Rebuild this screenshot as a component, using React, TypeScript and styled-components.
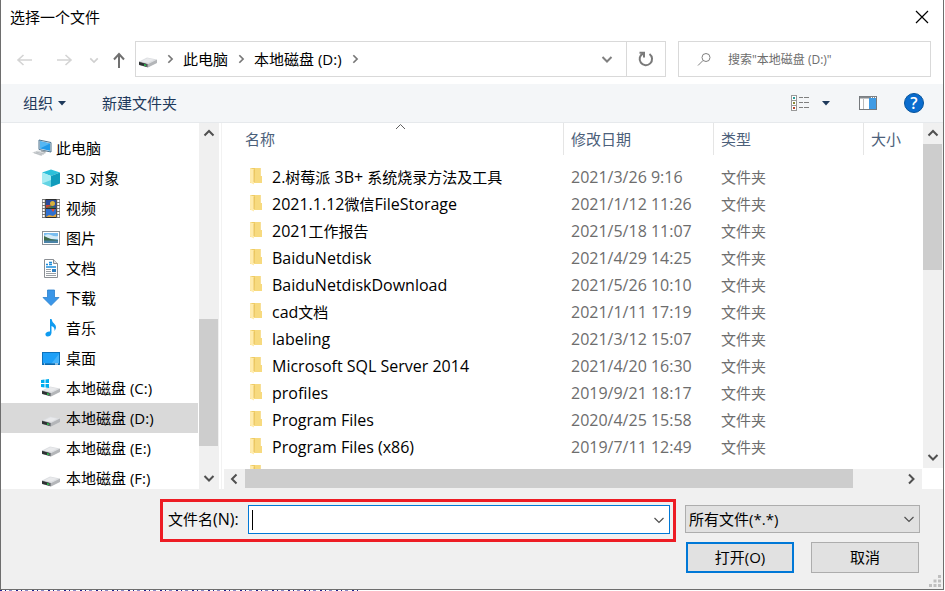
import React from 'react';
import styled, { createGlobalStyle } from 'styled-components';

const uiFont = '"Open Sans", "Noto Sans CJK SC", sans-serif';

const GlobalStyle = createGlobalStyle`
  *, *::before, *::after { box-sizing: border-box; }
  html, body { margin: 0; height: 100%; overflow: hidden; }
  body { background: #fff; font-family: ${uiFont}; font-size: 15px; line-height: 24px; color: #000; }
  button, input, select { font: inherit; color: inherit; }
  button { background: none; border: 0; padding: 0; cursor: default; }
  svg { display: block; flex: none; }
`;

const Desktop = styled.div`
  height: 100vh;
  display: flex;
  flex-direction: column;
  padding-right: 1px;
`;

const Dialog = styled.div`
  flex: 1;
  min-height: 0;
  display: flex;
  flex-direction: column;
  border: solid #6e6e6e;
  border-width: 0 1px 1px 1px;
  background: #fff;
`;

const Backdrop = styled.div`
  height: 1px;
  width: 38%;
  background: repeating-linear-gradient(90deg, #22228c 0 2px, #fff 2px 5px, #22228c 5px 6px, #fff 6px 9px, #8a8ac8 9px 12px, #fff 12px 16px);
`;

const TitleBar = styled.header`
  height: 41px;
  flex: none;
  display: flex;
  justify-content: space-between;
  padding: 0 14px 0 9px;
`;

const Title = styled.h1`
  margin: 0;
  font-size: 15px;
  font-weight: 400;
  line-height: 35px;
`;

const CloseButton = styled.button`
  height: 34px;
`;

const NavBar = styled.nav`
  flex: none;
  display: flex;
  align-items: center;
  padding: 0 12px 7px 14px;
`;

const NavButtons = styled.div`
  width: 120px;
  flex: none;
  display: grid;
  grid-template-columns: 41px 33px 21px 25px;
  align-items: center;
  padding-top: 2px;
`;

const Field = styled.div`
  height: 36px;
  display: flex;
  align-items: center;
  border: 1px solid #d9d9d9;
  min-width: 0;
`;

const AddressField = styled(Field)`
  flex: 529 1 0;
`;

const SearchField = styled(Field)`
  flex: 233 1 0;
  margin-left: 12px;
  padding-left: 18px;
  gap: 16px;
`;

const SearchInput = styled.input`
  flex: 1;
  min-width: 0;
  height: 32px;
  border: 0;
  padding: 0;
  outline: 0;
  font-size: 12px;
  &::placeholder { color: #6d6d6d; opacity: 1; }
`;

const Crumbs = styled.div`
  flex: 1;
  min-width: 0;
  display: flex;
  align-items: center;
  padding-left: 2px;
  gap: 8px;
  white-space: nowrap;
`;

const AddressButton = styled.button<{ $divided?: boolean }>`
  width: 39px;
  height: 34px;
  display: grid;
  place-items: center;
  border-left: ${p => (p.$divided ? '1px solid #d9d9d9' : '0')};
`;

const Toolbar = styled.div`
  flex: none;
  height: 39px;
  display: flex;
  align-items: center;
  padding: 0 19px 0 22px;
  background: #f4f6f8;
  border-bottom: 1px solid #e6e9ec;
  color: #1e395b;
`;

const ToolButton = styled.button`
  display: flex;
  align-items: center;
  gap: 5px;
  margin-right: 36px;
`;

const ToolIcons = styled.div`
  margin-left: auto;
  display: flex;
  align-items: center;
`;

const IconButton = styled.button<{ $gap: number }>`
  margin-left: ${p => p.$gap}px;
`;

const Body = styled.div`
  flex: 1;
  min-height: 0;
  display: flex;
`;

const Sidebar = styled.aside`
  flex: none;
  width: 221px;
  display: flex;
  border-right: 1px solid #f2f2f2;
`;

const Tree = styled.ul`
  flex: 1;
  margin: 0;
  padding: 10px 0 0;
  list-style: none;
  overflow: hidden;
`;

const TreeItem = styled.li<{ $root?: boolean; $selected?: boolean }>`
  height: 30px;
  display: flex;
  align-items: center;
  gap: ${p => (p.$root ? 4 : 6)}px;
  margin-right: 1px;
  padding-left: ${p => (p.$root ? 31 : 40)}px;
  background: ${p => (p.$selected ? '#d9d9d9' : 'transparent')};
  white-space: nowrap;
`;

const VScroll = styled.div<{ $inset?: number }>`
  flex: none;
  width: 20px;
  margin-right: ${p => p.$inset ?? 0}px;
  display: flex;
  flex-direction: column;
  align-items: stretch;
  background: #f0f0f0;
`;

const HScroll = styled.div`
  flex: none;
  height: 20px;
  margin-left: 2px;
  display: flex;
  background: #f0f0f0;
`;

const ScrollButton = styled.button`
  flex: none;
  width: 20px;
  height: 21px;
  display: grid;
  place-items: center;
  padding: 0 1px 1px 0;
`;

const WideScrollButton = styled(ScrollButton)`
  width: 21px;
`;

const Track = styled.div<{ $horizontal?: boolean }>`
  flex: 1;
  display: flex;
  flex-direction: ${p => (p.$horizontal ? 'row' : 'column')};
`;

const Space = styled.div<{ $grow: number }>`
  flex: ${p => p.$grow} 1 0;
`;

const Thumb = styled(Space)`
  background: #cdcdcd;
  margin: 0 1px 0 0;
`;

const HThumb = styled(Space)`
  background: #cdcdcd;
  height: 19px;
`;

const Main = styled.main`
  flex: 1;
  min-width: 0;
  display: flex;
`;

const ListColumn = styled.div`
  flex: 1;
  min-width: 0;
  display: flex;
  flex-direction: column;
`;

const ListViewport = styled.div`
  flex: 1;
  min-height: 0;
  overflow: hidden;
`;

const ScrollColumn = styled.div`
  flex: none;
  width: 21px;
  padding: 0 0 21px 1px;
  display: flex;
`;

const FileTable = styled.table`
  width: 100%;
  table-layout: fixed;
  border-collapse: separate;
  border-spacing: 0;
  white-space: nowrap;
  tbody::before { content: ''; display: block; height: 8px; }
`;

const Head = styled.th<{ $width?: number }>`
  width: ${p => (p.$width ? `${p.$width}px` : 'auto')};
  height: 32px;
  padding: 0 0 0 ${p => (p.$width ? 7 : 23)}px;
  border-left: ${p => (p.$width ? '1px solid #e5e5e5' : '0')};
  color: #4c607a;
  font-weight: 400;
  text-align: left;
`;

const HeadLabel = styled.div`
  position: relative;
  margin-right: 18px;
`;

const SortMark = styled.svg`
  position: absolute;
  left: 50%;
  top: -4px;
`;

const Cell = styled.td`
  height: 27px;
  padding: 0 0 0 8px;
  color: #6d6d6d;
`;

const NameCell = styled(Cell)`
  padding-left: 27px;
  color: #000;
`;

const FileName = styled.div`
  display: flex;
  align-items: center;
  gap: 10px;
`;

const Latin = styled.span`
  font-size: 16px;
  line-height: 20px;
`;

const Footer = styled.footer`
  flex: none;
  position: relative;
  height: 100px;
  display: grid;
  grid-template-columns: 1fr 235px;
  grid-template-rows: 43px 31px;
  column-gap: 9px;
  padding: 10px 23px 0 159px;
  background: #f0f0f0;
`;

const Highlight = styled.div`
  display: flex;
  align-items: center;
  justify-content: space-between;
  gap: 9px;
  border: 3px solid #ed1c24;
  padding: 0 3px 2px 5px;
  label { padding-bottom: 2px; }
`;

const Combo = styled.div`
  flex: 1;
  height: 29px;
  display: flex;
  align-items: center;
  padding: 0 4px 0 3px;
  border: 1px solid #0078d7;
  background: #fff;
`;

const Caret = styled.span`
  width: 1px;
  height: 20px;
  background: #000;
`;

const NameInput = styled.input`
  flex: 1;
  min-width: 0;
  border: 0;
  outline: 0;
  padding: 0 2px;
  height: 24px;
  background: transparent;
`;

const FilterBox = styled.div`
  display: grid;
  align-items: center;
  height: 28px;
  margin-top: 6px;
  border: 1px solid #adadad;
  background: #e1e1e1;
  & > * { grid-area: 1 / 1; }
  & > svg { justify-self: end; margin-right: 4px; pointer-events: none; }
`;

const FilterSelect = styled.select`
  appearance: none;
  width: 100%;
  height: 26px;
  border: 0;
  outline: 0;
  padding: 0 3px;
  background: transparent;
`;

const Actions = styled.div`
  grid-column: 2;
  display: grid;
  grid-template-columns: 1fr 1fr;
  gap: 17px;
  padding: 0 1px;
`;

const ActionButton = styled.button<{ $primary?: boolean }>`
  height: 31px;
  padding-bottom: 2px;
  background: #e1e1e1;
  border: ${p => (p.$primary ? '2px solid #0078d7' : '1px solid #adadad')};
`;

const Grip = styled.svg`
  position: absolute;
  right: 2px;
  bottom: 2px;
`;

type Dir = 'up' | 'down' | 'left' | 'right';
const chevrons: Record<Dir, string> = {
  up: 'M1.500 8.500 L6 4 L10.500 8.500',
  down: 'M1.500 4 L6 8.500 L10.500 4',
  left: 'M8.500 1.500 L4 6 L8.500 10.500',
  right: 'M4 1.500 L8.500 6 L4 10.500',
};

const Chevron = ({ dir, size = 12, color = '#505050', weight = 2 }: { dir: Dir; size?: number; color?: string; weight?: number }) => (
  <svg width={size} height={size} viewBox="0 0 12 12" fill="none" stroke={color} strokeWidth={weight}>
    <path d={chevrons[dir]} />
  </svg>
);

const Arrow = ({ dir, color }: { dir: 'left' | 'right' | 'up'; color: string }) => {
  const d = {
    left: 'M17 9 H3 M8.500 4 L3 9 L8.500 14',
    right: 'M1 9 H15 M9.500 4 L15 9 L9.500 14',
    up: 'M9 17 V3 M4 8.500 L9 3 L14 8.500',
  }[dir];
  return (
    <svg width="18" height="18" viewBox="0 0 18 18" fill="none" stroke={color} strokeWidth={dir === 'up' ? 2 : 1.6}>
      <path d={d} />
    </svg>
  );
};

const DriveIcon = ({ windows }: { windows?: boolean }) => (
  <svg width="19" height="18" viewBox="0 0 19 18">
    <path d="M1 11.500 L9 7.500 L19 9.500 L10 14Z" fill="#dcdee1" />
    <path d="M3 11.500 L9.500 8.300 L16 9.700 L10 12.500Z" fill="#e9eaec" />
    <path d="M10 14 L19 9.500 V13 L10 17.500Z" fill="#b4b6b9" />
    <path d="M1 11.500 L10 14 V17.500 L1 15Z" fill="#7e8286" />
    <path d="M1 12 L8.500 14 V16.800 L1 14.700Z" fill="#2e3133" />
    <path d="M6 14 L8 14.500 V16.300 L6 15.800Z" fill="#2fb84f" />
    {windows && <path d="M0 1 L3.500 .5V4H0Z M4.500 .5 L8 0V4H4.500Z M0 5H3.500V8.500L0 8Z M4.500 5H8V9L4.500 8.500Z" fill="#00adef" />}
  </svg>
);

const PcIcon = () => (
  <svg width="20" height="18" viewBox="0 0 20 18">
    <path d="M7 1 L19 3.500 V13 L7 10.500Z" fill="#dfe7ee" />
    <path d="M7 1 L19 3.500 V13 L7 10.500Z" fill="none" stroke="#4d7590" />
    <path d="M8 2.300 L18 4.500 V11.700 L8 9.500Z" fill="#2199e8" />
    <path d="M8 2.300 L18 4.500 L8 9.500Z" fill="#55b7f3" />
    <path d="M9 11 L14 12 L13 14.500 L9 13.500Z" fill="#9ca4aa" />
    <path d="M0 13.500 L6 11.500 L14 14 L9 17Z" fill="#d8dbdd" />
    <path d="M2 13.700 L10 16 M4 13 L12 15" stroke="#a9afb3" strokeWidth=".7" />
  </svg>
);

const CubeIcon = () => (
  <svg width="19" height="19" viewBox="0 0 19 19">
    <path d="M1 3.500 L10 .5 L19 3.500 L10 7Z" fill="#2cc0da" />
    <path d="M1 3.500 L10 7 V18 L1 14.500Z" fill="#a7ecf3" />
    <path d="M1 14.500 L10 11 V18Z" fill="#62d3e3" />
    <path d="M10 7 L19 3.500 V14.500 L10 18Z" fill="#109cbc" />
  </svg>
);

const VideoIcon = () => (
  <svg width="19" height="19" viewBox="0 0 19 19">
    <rect x="1" width="18" height="19" fill="#777" />
    <rect x="4.500" width="11" height="19" fill="#2b2b2b" />
    <path d="M2.700 1 V19 M17.300 1 V19" stroke="#fff" strokeWidth="2" strokeDasharray="2 1" />
    <rect x="5" y="1" width="10" height="8" fill="#2a4a9c" />
    <rect x="5" y="10" width="10" height="8" fill="#2f70d0" />
    <path d="M5 6 H10 V9 H5Z" fill="#c44536" />
    <circle cx="11.500" cy="4.500" r="2.500" fill="#d8b13c" />
    <path d="M5 8.500 L10 7 L15 9Z" fill="#447b36" />
    <path d="M10 10 H14 L12 13Z" fill="#e04a32" />
    <path d="M5 18 L8 16 L12 17 L15 15 V18Z" fill="#e3a53a" />
  </svg>
);

const PictureIcon = () => (
  <svg width="19" height="16" viewBox="0 0 19 16">
    <rect x="1.500" y="1.500" width="17" height="13" fill="#fff" stroke="#8d9399" />
    <rect x="3" y="3" width="14" height="10" fill="#79bdf0" />
    <path d="M3 6 Q6 3 10 5 T17 6 V9 H3Z" fill="#d5ebf8" />
    <path d="M3 6 Q7 8 10 9 L17 10 V11 H3Z" fill="#3f6b4c" />
    <path d="M3 10.500 H17 V13 H3Z" fill="#4b84a8" />
  </svg>
);

const DocumentIcon = () => (
  <svg width="19" height="19" viewBox="0 0 19 19">
    <path d="M3.500 .5 H12.500 L16.500 4.500 V18.500 H3.500Z" fill="#fff" stroke="#8b8f94" />
    <path d="M12.500 .5 V4.500 H16.500" fill="#e3e3e3" stroke="#8b8f94" />
    <path d="M5 5.500 H7 M8 3.500 H11 M8 5.500 H11 M5 8 H15" stroke="#1c8ddb" strokeWidth="1.400" />
    <path d="M5 10.500 H10 M5 12.500 H10 M5 14.500 H15 M5 16.500 H15" stroke="#9aa0a5" />
    <rect x="11" y="10" width="4" height="3" fill="#2f7fc0" />
  </svg>
);

const DownloadIcon = () => (
  <svg width="19" height="18" viewBox="0 0 19 18">
    <path d="M6.500 1 H13.500 V8.500 H18 L10 16.500 L2 8.500 H6.500Z" fill="#3a96e8" stroke="#2a7fcc" strokeWidth=".8" />
  </svg>
);

const MusicIcon = () => (
  <svg width="19" height="18" viewBox="0 0 19 18">
    <path d="M9 0 H10.500 Q11 3 13.500 5 Q16.500 8 13.500 12 Q14 8 10.500 7 V14 Q10 17.500 6.500 17.500 Q4 17 4.500 14.500 Q6 12 9 12.500Z" fill="#0f9bf0" />
  </svg>
);

const DesktopIcon = () => (
  <svg width="19" height="15" viewBox="0 0 19 15">
    <rect x="1.500" y="1.500" width="17" height="12" fill="#1ea0f8" stroke="#0c72bd" />
    <path d="M10 13 L18 3 V13Z" fill="#45b3fb" />
    <path d="M2 13 H18" stroke="#0b5c9a" />
    <path d="M3 13 H4 M14 13 H17" stroke="#fff" />
  </svg>
);

const FolderIcon = () => (
  <svg width="13" height="20" viewBox="0 0 13 20">
    <path d="M1 1 H11.500 V9 H13 V16 H1Z" fill="#eecb64" />
    <path d="M6 1 H11.500 V9 H13 V16 H5Z" fill="#f7da7f" />
    <path d="M1 1 L5 2.500 V17.500 L1 15.500Z" fill="#ffebac" />
    <path d="M5 3 V15" stroke="#e5bd54" strokeWidth=".8" />
  </svg>
);

const RefreshIcon = () => (
  <svg width="18" height="18" viewBox="0 0 18 18" fill="none" stroke="#7a7a7a" strokeWidth="2">
    <path d="M12.500 4 A6.200 6.200 0 1 1 6 3.500" />
    <path d="M2.500 2.800 H7 V7.500" />
  </svg>
);

const SearchIcon = () => (
  <svg width="15" height="15" viewBox="0 0 15 15" fill="none" stroke="#808080" strokeWidth="1">
    <circle cx="9" cy="5.500" r="4" />
    <path d="M6 8.500 L1 13.500" />
  </svg>
);

const ViewIcon = () => (
  <svg width="19" height="16" viewBox="0 0 19 16">
    {['#2c9b9b', '#8a8a35', '#b8462d'].map((fill, i) => (
      <g key={fill}>
        <rect x=".5" y={0.5 + i * 5} width="5" height="5" fill="#fff" stroke="#999" />
        <rect x="2" y={2 + i * 5} width="2" height="2" fill={fill} />
        <path d={`M8 ${2.5 + i * 5} H12 M13 ${2.5 + i * 5} H18`} stroke="#808080" />
      </g>
    ))}
  </svg>
);

const PreviewIcon = () => (
  <svg width="18" height="15" viewBox="0 0 18 15">
    <rect x=".5" y=".5" width="17" height="13" fill="#fff" stroke="#75797d" />
    <path d="M1 1.500 H17" stroke="#85898d" strokeWidth="2" />
    <path d="M4.500 3 V13" stroke="#bbb" />
    <rect x="10" y="2" width="7" height="11" fill="#409be4" />
    <path d="M12 1.500 H17" stroke="#fff" strokeDasharray="1 1" />
  </svg>
);

const Triangle = () => (
  <svg width="8" height="5" viewBox="0 0 8 5"><path d="M0 0 H8 L4 4.500Z" fill="#1e395b" /></svg>
);

const HelpBadge = styled.span`
  width: 20px;
  height: 20px;
  display: grid;
  place-items: center;
  border-radius: 50%;
  border: 1px solid #07549c;
  background: #0a6cce;
  color: #fff;
  font-size: 16px;
  font-weight: 600;
  line-height: 18px;
`;

const MixedText = ({ text }: { text: string }) => (
  <span>
    {text.split(/([\x20-\x7e]+)/).map((run, i) => (i % 2 ? <Latin key={i}>{run}</Latin> : run))}
  </span>
);

const places: { name: string; icon: React.ReactNode; root?: boolean; selected?: boolean }[] = [
  { name: '此电脑', icon: <PcIcon />, root: true },
  { name: '3D 对象', icon: <CubeIcon /> },
  { name: '视频', icon: <VideoIcon /> },
  { name: '图片', icon: <PictureIcon /> },
  { name: '文档', icon: <DocumentIcon /> },
  { name: '下载', icon: <DownloadIcon /> },
  { name: '音乐', icon: <MusicIcon /> },
  { name: '桌面', icon: <DesktopIcon /> },
  { name: '本地磁盘 (C:)', icon: <DriveIcon windows /> },
  { name: '本地磁盘 (D:)', icon: <DriveIcon />, selected: true },
  { name: '本地磁盘 (E:)', icon: <DriveIcon /> },
  { name: '本地磁盘 (F:)', icon: <DriveIcon /> },
];

const files = [
  ['2.树莓派 3B+ 系统烧录方法及工具', '2021/3/26 9:16'],
  ['2021.1.12微信FileStorage', '2021/1/12 11:26'],
  ['2021工作报告', '2021/5/18 11:07'],
  ['BaiduNetdisk', '2021/4/29 14:25'],
  ['BaiduNetdiskDownload', '2021/5/26 10:10'],
  ['cad文档', '2021/1/11 17:19'],
  ['labeling', '2021/3/12 15:07'],
  ['Microsoft SQL Server 2014', '2021/4/20 16:30'],
  ['profiles', '2019/9/21 18:17'],
  ['Program Files', '2020/4/25 15:58'],
  ['Program Files (x86)', '2019/7/11 12:49'],
];

export default function App() {
  return (
    <Desktop>
      <GlobalStyle />
      <Dialog role="dialog" aria-labelledby="dialog-title">
        <TitleBar>
          <Title id="dialog-title">选择一个文件</Title>
          <CloseButton aria-label="关闭">
            <svg width="14" height="14" viewBox="0 0 14 14" stroke="#000" strokeWidth="1.200"><path d="M1 1 L13 13 M13 1 L1 13" /></svg>
          </CloseButton>
        </TitleBar>

        <NavBar>
          <NavButtons>
            <button aria-label="后退"><Arrow dir="left" color="#d4d4d4" /></button>
            <button aria-label="前进"><Arrow dir="right" color="#d4d4d4" /></button>
            <button aria-label="最近"><Chevron dir="down" size={10} color="#d0d0d0" /></button>
            <button aria-label="上移"><Arrow dir="up" color="#707070" /></button>
          </NavButtons>
          <AddressField>
            <Crumbs>
              <DriveIcon />
              <Chevron dir="right" size={10} color="#777" />
              <span>此电脑</span>
              <Chevron dir="right" size={10} color="#777" />
              <span>本地磁盘 (D:)</span>
              <Chevron dir="right" size={10} color="#777" />
            </Crumbs>
            <AddressButton aria-label="展开地址"><Chevron dir="down" color="#808080" /></AddressButton>
            <AddressButton $divided aria-label="刷新"><RefreshIcon /></AddressButton>
          </AddressField>
          <SearchField>
            <SearchIcon />
            <SearchInput aria-label="搜索" placeholder={'搜索"本地磁盘 (D:)"'} />
          </SearchField>
        </NavBar>

        <Toolbar>
          <ToolButton>组织 <Triangle /></ToolButton>
          <ToolButton>新建文件夹</ToolButton>
          <ToolIcons>
            <IconButton $gap={0} aria-label="视图"><ViewIcon /></IconButton>
            <IconButton $gap={12} aria-label="更多选项"><Triangle /></IconButton>
            <IconButton $gap={29} aria-label="预览窗格"><PreviewIcon /></IconButton>
            <IconButton $gap={27} aria-label="帮助"><HelpBadge>?</HelpBadge></IconButton>
          </ToolIcons>
        </Toolbar>

        <Body>
          <Sidebar>
            <Tree>
              {places.map(p => (
                <TreeItem key={p.name} $root={p.root} $selected={p.selected}>
                  {p.icon}
                  <span>{p.name}</span>
                </TreeItem>
              ))}
            </Tree>
            <VScroll $inset={2}>
              <ScrollButton aria-label="向上滚动"><Chevron dir="up" /></ScrollButton>
              <Track>
                <Space $grow={175} />
                <Thumb $grow={127} />
                <Space $grow={22} />
              </Track>
              <ScrollButton aria-label="向下滚动"><Chevron dir="down" /></ScrollButton>
            </VScroll>
          </Sidebar>

          <Main>
            <ListColumn>
              <ListViewport>
                <FileTable>
                  <thead>
                    <tr>
                      <Head>
                        <HeadLabel>
                          名称
                          <SortMark width="11" height="7" viewBox="0 0 11 7" fill="none" stroke="#606060"><path d="M1 6 L5.500 1.500 L10 6" /></SortMark>
                        </HeadLabel>
                      </Head>
                      <Head $width={150}>修改日期</Head>
                      <Head $width={150}>类型</Head>
                      <Head $width={59}>大小</Head>
                    </tr>
                  </thead>
                  <tbody>
                    {files.map(([name, date]) => (
                      <tr key={name}>
                        <NameCell><FileName><FolderIcon /><MixedText text={name} /></FileName></NameCell>
                        <Cell><MixedText text={date} /></Cell>
                        <Cell>文件夹</Cell>
                        <Cell />
                      </tr>
                    ))}
                    <tr>
                      <NameCell><FileName><FolderIcon /></FileName></NameCell>
                      <Cell /><Cell /><Cell />
                    </tr>
                  </tbody>
                </FileTable>
              </ListViewport>
              <HScroll>
                <WideScrollButton aria-label="向左滚动"><Chevron dir="left" /></WideScrollButton>
                <Track $horizontal>
                  <HThumb $grow={608} />
                  <Space $grow={48} />
                </Track>
                <WideScrollButton aria-label="向右滚动"><Chevron dir="right" /></WideScrollButton>
              </HScroll>
            </ListColumn>
            <ScrollColumn>
              <VScroll>
                <ScrollButton aria-label="向上滚动"><Chevron dir="up" /></ScrollButton>
                <Track>
                  <Thumb $grow={126} />
                  <Space $grow={177} />
                </Track>
                <ScrollButton aria-label="向下滚动"><Chevron dir="down" /></ScrollButton>
              </VScroll>
            </ScrollColumn>
          </Main>
        </Body>

        <Footer>
          <Highlight>
            <label htmlFor="file-name"><MixedText text="文件名(N):" /></label>
            <Combo>
              <Caret />
              <NameInput id="file-name" type="text" />
              <button aria-label="显示历史"><Chevron dir="down" weight={1.2} /></button>
            </Combo>
          </Highlight>
          <FilterBox>
            <FilterSelect aria-label="文件类型">
              <option>所有文件(*.*)</option>
            </FilterSelect>
            <Chevron dir="down" weight={1.2} />
          </FilterBox>
          <Actions>
            <ActionButton $primary>打开(O)</ActionButton>
            <ActionButton>取消</ActionButton>
          </Actions>
          <Grip width="12" height="12" viewBox="0 0 12 12" fill="#bfbfbf">
            <path d="M9 0h3v3h-3z M4.500 4.500h3v3h-3z M9 4.500h3v3h-3z M0 9h3v3h-3z M4.500 9h3v3h-3z M9 9h3v3h-3z" />
          </Grip>
        </Footer>
      </Dialog>
      <Backdrop />
    </Desktop>
  );
}
